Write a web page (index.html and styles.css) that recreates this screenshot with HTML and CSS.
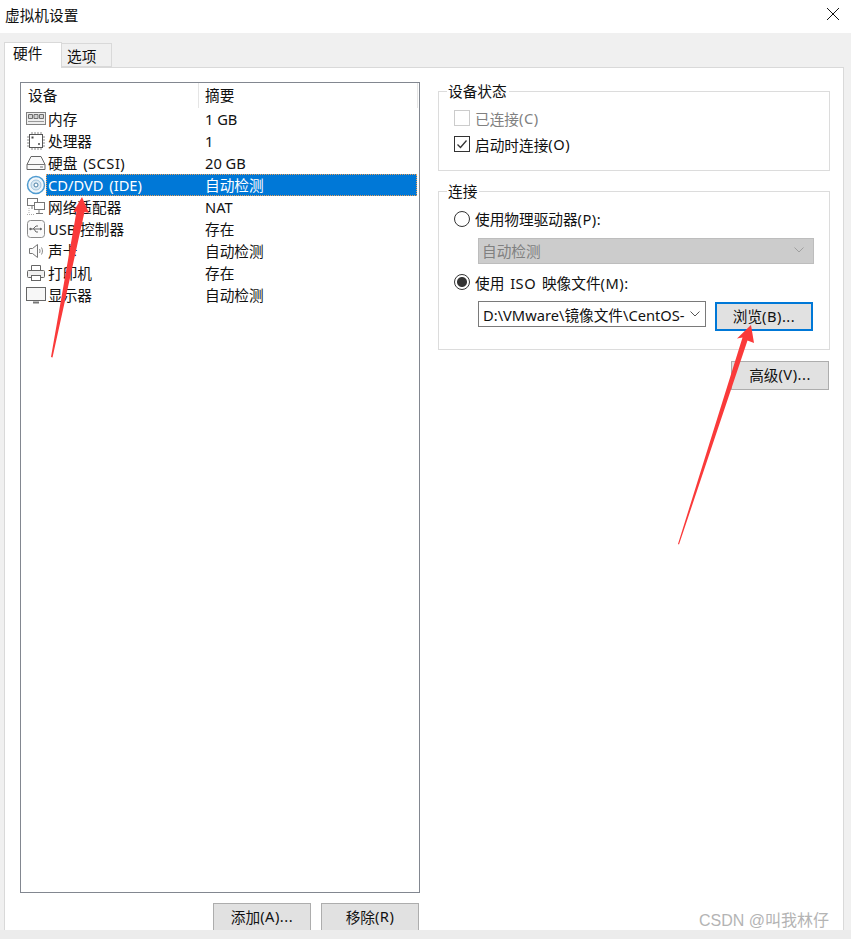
FILE: index.html
```html
<!DOCTYPE html>
<html lang="zh-CN">
<head>
<meta charset="utf-8">
<title>虚拟机设置</title>
<link rel="stylesheet" href="styles.css">
</head>
<body>
<div class="window">
  <header class="titlebar">
    <span>虚拟机设置</span>
    <svg class="close" width="14" height="14" viewBox="0 0 14 14"><path d="M1 1L13 13M13 1L1 13" stroke="#111" stroke-width="1" fill="none"/></svg>
  </header>
  <nav class="tabs">
    <div class="tab tab-active">硬件</div>
    <div class="tab">选项</div>
  </nav>
  <main class="panel">
    <section class="left">
      <div class="list">
        <div class="list-head">
          <div class="col-a">设备</div>
          <div class="col-b">摘要</div>
        </div>
        <div class="row">
          <svg class="ico" width="20" height="20" viewBox="0 0 20 20"><rect x="0.500" y="3.500" width="19" height="12" fill="#eee" stroke="#808080"/><path d="M2.500 5.500h4v4h-4zM8 5.500h4v4H8zM13.500 5.500h4v4h-4z" fill="#d4d4d4" stroke="#6e6e6e"/><path d="M2 12.500h16" stroke="#999"/></svg>
          <div class="cells"><div class="name">内存</div><div class="sum">1 GB</div></div>
        </div>
        <div class="row">
          <svg class="ico" width="20" height="20" viewBox="0 0 20 20"><rect x="3.500" y="3.500" width="13" height="13" fill="#fff" stroke="#555"/><path d="M6 1v2M9 1v2M12 1v2M15 1v2M6 17v2M9 17v2M12 17v2M15 17v2M1 6h2M1 9h2M1 12h2M1 15h2M17 6h2M17 9h2M17 12h2M17 15h2" stroke="#888"/><rect x="5.500" y="5.500" width="2" height="2" fill="#444"/><rect x="12" y="12" width="2" height="2" fill="#777"/></svg>
          <div class="cells"><div class="name">处理器</div><div class="sum">1</div></div>
        </div>
        <div class="row">
          <svg class="ico" width="20" height="20" viewBox="0 0 20 20"><path d="M5 3.500h10l4 8v5H1v-5z" fill="#fafafa" stroke="#666"/><path d="M1 11.500h18" stroke="#777"/><path d="M14 14h3" stroke="#777"/></svg>
          <div class="cells"><div class="name">硬盘<span class="lat lat-sp"> (SCSI)</span></div><div class="sum">20 GB</div></div>
        </div>
        <div class="row">
          <svg class="ico" width="20" height="20" viewBox="0 0 20 20"><circle cx="10" cy="10" r="8.500" fill="#f2f7fb" stroke="#4f9bd0" stroke-width="1.500"/><circle cx="10" cy="10" r="5" fill="#dbe9f3" stroke="#9fc3dc"/><circle cx="10" cy="10" r="2" fill="#fff" stroke="#4a7fa5"/></svg>
          <div class="cells cells-selected"><div class="name"><span class="lat-word">CD/DVD (IDE)</span></div><div class="sum">自动检测</div></div>
        </div>
        <div class="row">
          <svg class="ico" width="20" height="20" viewBox="0 0 20 20"><rect x="1.500" y="1.500" width="10" height="7" fill="#fff" stroke="#777"/><rect x="8.500" y="5.500" width="10" height="7" fill="#fff" stroke="#777"/><path d="M6 9v3M13 13v3M10 16.500h7" stroke="#777"/><path d="M1 17.500h7M3 11v6" stroke="#aaa" stroke-dasharray="1 1"/></svg>
          <div class="cells"><div class="name">网络适配器</div><div class="sum">NAT</div></div>
        </div>
        <div class="row">
          <svg class="ico" width="20" height="20" viewBox="0 0 20 20"><rect x="1.500" y="1.500" width="17" height="17" rx="3" fill="#fafafa" stroke="#8a8a8a"/><path d="M4 10h12M7 10l3-3h2M8 10l2 3h2" fill="none" stroke="#666"/><path d="M16 10l-2-1.500v3z" fill="#666"/><circle cx="4.500" cy="10" r="1.200" fill="#666"/></svg>
          <div class="cells"><div class="name">USB 控制器</div><div class="sum">存在</div></div>
        </div>
        <div class="row">
          <svg class="ico" width="20" height="20" viewBox="0 0 20 20"><path d="M3.500 7.500h3l5-4v13l-5-4h-3z" fill="#fafafa" stroke="#777"/><path d="M13.500 8c.7 1.300.7 2.700 0 4M15.500 6.500c1.300 2.300 1.300 4.700 0 7" fill="none" stroke="#888"/></svg>
          <div class="cells"><div class="name">声卡</div><div class="sum">自动检测</div></div>
        </div>
        <div class="row">
          <svg class="ico" width="20" height="20" viewBox="0 0 20 20"><path d="M5.500 7V2.500h9V7" fill="#fff" stroke="#666"/><rect x="1.500" y="7.500" width="17" height="7" rx="1" fill="#f0f0f0" stroke="#666"/><rect x="5.500" y="12.500" width="9" height="5" fill="#fff" stroke="#666"/></svg>
          <div class="cells"><div class="name">打印机</div><div class="sum">存在</div></div>
        </div>
        <div class="row">
          <svg class="ico" width="20" height="20" viewBox="0 0 20 20"><rect x="0.500" y="2.500" width="19" height="13" fill="#f7f7f7" stroke="#666"/><path d="M7 17.500h6" stroke="#777" stroke-width="2"/></svg>
          <div class="cells"><div class="name">显示器</div><div class="sum">自动检测</div></div>
        </div>
      </div>
      <div class="list-actions">
        <div class="btn btn-list">添加<span class="lat">(A)...</span></div>
        <div class="btn btn-list">移除<span class="lat">(R)</span></div>
      </div>
    </section>
    <section class="right">
      <div class="group group-status">
        <div class="legend">设备状态</div>
        <div class="opt opt-disabled"><span class="check check-off"></span>已连接<span class="lat">(C)</span></div>
        <div class="opt"><span class="check"><svg width="14" height="14" viewBox="0 0 14 14"><path d="M2.500 7.500L5.500 10.500L11.500 3.500" fill="none" stroke="#333" stroke-width="1.300"/></svg></span>启动时连接<span class="lat">(O)</span></div>
      </div>
      <div class="group group-conn">
        <div class="legend">连接</div>
        <div class="opt"><span class="radio"></span><span class="lift">使用物理驱动器<span class="lat">(P):</span></span></div>
        <div class="select select-off">
          <span>自动检测</span>
          <svg width="10" height="6" viewBox="0 0 10 6"><path d="M.5.500L5 5L9.500.500" fill="none" stroke="#a0a0a0"/></svg>
        </div>
        <div class="opt opt-iso"><span class="radio radio-on"></span><span>使用<span class="lat lat-sp"> ISO </span>映像文件<span class="lat">(M):</span></span></div>
        <div class="file-row">
          <div class="select select-file">
            <span>D:\VMware\镜像文件\CentOS-</span>
            <svg width="10" height="6" viewBox="0 0 10 6"><path d="M.5.500L5 5L9.500.500" fill="none" stroke="#555"/></svg>
          </div>
          <div class="btn btn-focus">浏览<span class="lat">(B)...</span></div>
        </div>
      </div>
      <div class="adv-row"><div class="btn btn-adv">高级<span class="lat">(V)...</span></div></div>
    </section>
  </main>
  <div class="statusbar"></div>
  <svg class="arrows" width="851" height="939" viewBox="0 0 851 939">
    <path d="M82 197L89 213L84.500 212L52.500 357.500L51 357L76.500 211.500L73 212.500Z" fill="#fa3a3a"/>
    <path d="M751 325L754 343L747.500 340.500L679 544.500L678 544L742.500 337.500L737 338.500Z" fill="#fa3a3a"/>
  </svg>
  <div class="watermark">CSDN @叫我林仔</div>
</div>
</body>
</html>
```

FILE: styles.css
```css
* { box-sizing: border-box; }
html, body { margin: 0; padding: 0; }
body {
  width: 851px;
  height: 939px;
  overflow: hidden;
  font-family: "Noto Sans", "Noto Sans CJK SC", sans-serif;
  font-size: 14.67px;
  color: #111;
  background: #f0f0f0;
}
.window { position: relative; width: 851px; height: 939px; display: flex; flex-direction: column; }
.lat { letter-spacing: .5px; white-space: pre; }
.lat-sp { word-spacing: 1.5px; }
.lat-word { word-spacing: 2px; }

.titlebar {
  height: 33px;
  flex: none;
  background: #fff;
  display: flex;
  align-items: center;
  justify-content: space-between;
  padding: 0 11px 5px 5px;
}

.tabs {
  height: 34px;
  flex: none;
  display: flex;
  align-items: flex-end;
  padding-left: 4px;
  background: #f0f0f0;
  position: relative;
  z-index: 1;
}
.tab {
  width: 50px;
  height: 24px;
  border: 1px solid #d9d9d9;
  border-left: 0;
  background: #f0f0f0;
  padding-left: 5px;
  line-height: 24px;
}
.tab-active {
  width: 58px;
  height: 26px;
  margin-bottom: -1px;
  background: #fff;
  border-left: 1px solid #d9d9d9;
  border-bottom: 0;
  padding-left: 8px;
  line-height: 21px;
}

.panel {
  flex: none;
  height: 863px;
  margin: 0 7px 0 4px;
  background: #fff;
  border: 1px solid #d9d9d9;
  border-bottom: 0;
  display: flex;
  overflow: hidden;
}

.left { width: 433px; flex: none; padding: 14px 0 0 15px; }
.list {
  width: 400px;
  height: 811px;
  border: 1px solid #828790;
  background: #fff;
}
.list-head { display: flex; height: 25px; line-height: 25px; border-right: 1px solid #e5e5e5; margin-right: 1px; }
.col-a { width: 178px; padding-left: 7px; border-right: 1px solid #e5e5e5; }
.col-b { padding-left: 6px; }
.row { display: flex; height: 22px; line-height: 22px; align-items: center; padding-left: 5px; margin-right: 2px; }
.ico { flex: none; width: 20px; height: 20px; }
.cells { display: flex; flex: 1; height: 22px; }
.cells-selected { background: #0078d7; color: #fff; outline: 1px dotted #e8a05a; outline-offset: -1px; }
.name { width: 152px; flex: none; padding-left: 2px; white-space: pre; }
.sum { padding-left: 7px; }

.list-actions { display: flex; justify-content: flex-end; gap: 10px; width: 399px; margin-top: 10px; }
.btn {
  background: #e1e1e1;
  border: 1px solid #adadad;
  display: flex;
  align-items: center;
  justify-content: center;
  flex: none;
}
.btn-list { width: 98px; height: 29px; padding-bottom: 3px; }

.right { width: 392px; flex: none; padding-top: 23px; display: flex; flex-direction: column; }
.group { border: 1px solid #dcdcdc; padding: 0 0 0 15px; display: flex; flex-direction: column; }
.group-status { height: 80px; }
.group-conn { height: 159px; margin-top: 20px; }
.legend {
  align-self: flex-start;
  height: 20px;
  line-height: 20px;
  margin: -11px 0 0 -7px;
  padding: 0 2px 0 1px;
  background: #fff;
}
.opt { display: flex; align-items: center; height: 20px; white-space: pre; }
.lift { margin-bottom: 2px; }
.group-status .legend + .opt { margin-top: 7px; }
.group-status .opt + .opt { margin-top: 6px; }
.opt-disabled { color: #808080; }
.check {
  width: 16px;
  height: 16px;
  margin-right: 5px;
  border: 1px solid #333;
  background: #fff;
  display: flex;
  align-items: center;
  justify-content: center;
}
.check-off { border-color: #ccc; }
.radio {
  width: 16px;
  height: 16px;
  margin-right: 5px;
  border: 1px solid #333;
  border-radius: 50%;
  background: #fff;
  flex: none;
}
.radio-on { background: radial-gradient(circle, #333 0 4.5px, #fff 5.5px); }

.group-conn .legend + .opt { margin-top: 8px; }
.select {
  display: flex;
  align-items: center;
  justify-content: space-between;
}
.select-off {
  width: 336px;
  height: 26px;
  margin: 9px 0 0 24px;
  background: #ccc;
  border: 1px solid #bdbdbd;
  color: #808080;
  padding: 0 9px 2px 3px;
}
.opt-iso { margin-top: 8px; }
.file-row { display: flex; gap: 9px; margin: 9px 0 0 24px; align-items: flex-start; }
.select-file {
  width: 228px;
  height: 26px;
  background: #fff;
  border: 1px solid #7a7a7a;
  padding: 0 5px 0 4px;
  white-space: nowrap;
  overflow: hidden;
}
.btn-focus { width: 98px; height: 29px; margin-top: 1px; border: 2px solid #0078d7; padding-bottom: 2px; }
.adv-row { display: flex; justify-content: flex-end; margin-top: 11px; padding-right: 1px; }
.btn-adv { width: 98px; height: 29px; padding-bottom: 3px; }

.statusbar { flex: 1; background: #ececec; }

.arrows { position: absolute; left: 0; top: 0; pointer-events: none; }
.close { flex: none; }
.watermark {
  position: absolute;
  left: 699px;
  top: 909px;
  font-size: 16px;
  line-height: 24px;
  color: #b4b4b4;
  font-family: "Liberation Sans", "Noto Sans CJK SC", sans-serif;
  white-space: nowrap;
}
```
